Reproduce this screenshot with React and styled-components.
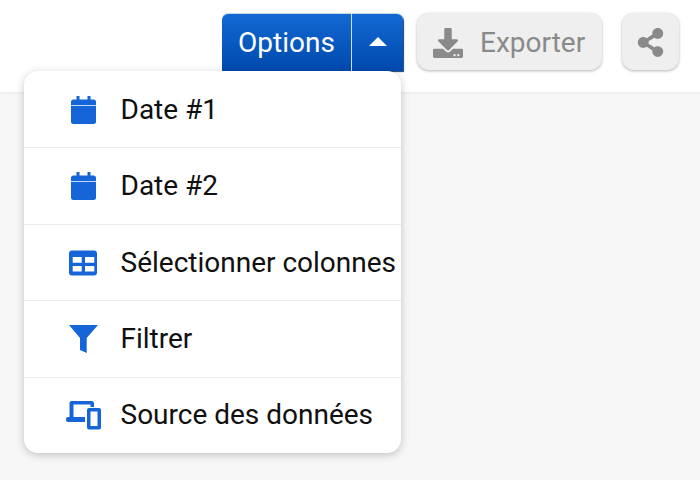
import React from "react"
import styled, { createGlobalStyle } from "styled-components"
import { FaDownload, FaShareAlt } from "react-icons/fa"

const GlobalStyle = createGlobalStyle`
  html, body {
    margin: 0;
    padding: 0;
    height: 100%;
    background: #f7f7f7;
    font-family: Roboto, "Liberation Sans", sans-serif;
    overflow: hidden;
  }
`

const Page = styled.div`
  position: relative;
  width: 700px;
  height: 480px;
  background: #f7f7f7;
`
const Header = styled.header`
  display: flex;
  justify-content: flex-end;
  align-items: flex-start;
  gap: 20px;
  height: 94px;
  box-sizing: border-box;
  padding: 14px 21px 0 0;
  background: #fff;
  border-bottom: 2px solid #efefef;
`
const SplitButton = styled.div`
  display: flex;
  width: 181px;
  height: 57px;
  border-radius: 6px 6px 0 0;
  color: #fff;
  background: linear-gradient(#1269d3, #0049ad);
  box-shadow: 1px 1px 1px #17407a, 0 -1px 1px #c5d3e6;
  margin-right: -6px;
`
const SplitLabel = styled.div`
  flex: 1;
  display: flex;
  align-items: center;
  justify-content: center;
  font-size: 28px;
  border-right: 1px solid #cfe0f5;
`
const SplitToggle = styled.div`
  width: 51px;
  display: flex;
  align-items: center;
  justify-content: center;
`
const Caret = styled.span`
  width: 0;
  height: 0;
  margin-top: -3px;
  border-left: 9px solid transparent;
  border-right: 9px solid transparent;
  border-bottom: 9px solid #fff;
`
const GreyButton = styled.div`
  display: flex;
  align-items: center;
  box-sizing: border-box;
  height: 57px;
  margin-top: -1px;
  padding-top: 2px;
  border-radius: 12px;
  color: #8a8a8a;
  background: #efefef;
  box-shadow: 0 1px 3px rgba(0, 0, 0, 0.3);
`
const ExportButton = styled(GreyButton)`
  width: 185px;
  padding-left: 16px;
  gap: 17px;
  font-size: 28px;
`
const ShareButton = styled(GreyButton)`
  width: 57px;
  justify-content: center;
`
const Menu = styled.ul`
  position: absolute;
  top: 71px;
  left: 24px;
  width: 377px;
  margin: 0;
  padding: 0;
  list-style: none;
  background: #fff;
  border-radius: 14px;
  box-shadow: 0 2px 8px rgba(0, 0, 0, 0.22);
`
const MenuItem = styled.li`
  display: flex;
  align-items: center;
  box-sizing: border-box;
  height: 76.4px;
  padding-left: 44px;
  gap: 21.5px;
  font-size: 28px;
  color: #101010;
  white-space: nowrap;
  & + & {
    padding-bottom: 0.8px;
    border-top: 1px solid #ececec;
  }
`
const IconBox = styled.svg`
  width: 31px;
  height: 31px;
  flex: none;
  fill: #1565d8;
`
const WideIconBox = styled(IconBox)`
  width: 36px;
  margin: 0 -3px 0 -2px;
`
const CalendarIcon = () => (
  <IconBox viewBox="0 0 31 31">
    <path d="M8.500 2h3v3.500h8V2h3v3.500h3A2.500 2.500 0 0 1 28 8v3H3V8a2.500 2.500 0 0 1 2.500-2.500h3zM3 11.800h25V27.500a2.500 2.500 0 0 1-2.500 2.500h-20A2.500 2.500 0 0 1 3 27.500z" />
  </IconBox>
)
const TableIcon = () => (
  <IconBox viewBox="0 0 31 31">
    <path fillRule="evenodd" d="M4 3.500h22a3 3 0 0 1 3 3v19a3 3 0 0 1-3 3H4a3 3 0 0 1-3-3v-19a3 3 0 0 1 3-3zM4.700 10v5.700h9V10zm12.300 0v5.700h9.300V10zM4.700 19v5.400h9V19zm12.300 0v5.400h9.300V19z" />
  </IconBox>
)
const FilterIcon = () => (
  <IconBox viewBox="0 0 31 31">
    <path d="M1 2h29L18.700 15v15L12 27V15z" />
  </IconBox>
)
const DevicesIcon = () => (
  <WideIconBox viewBox="0 0 36 31">
    <path fillRule="evenodd" d="M5.500 2h20A2.500 2.500 0 0 1 28 4.500V8h-3.500V5.500h-17V18H19v5H2a2 2 0 0 1-2-2v-1a2 2 0 0 1 2-2h1.500V4A2 2 0 0 1 5.500 2zM23 9h10a2 2 0 0 1 2 2v17.500a2 2 0 0 1-2 2H23a2 2 0 0 1-2-2V11a2 2 0 0 1 2-2zm1.500 3.500V27h7V12.500z" />
  </WideIconBox>
)

const items = [
  { label: "Date #1", Icon: CalendarIcon },
  { label: "Date #2", Icon: CalendarIcon },
  { label: "Sélectionner colonnes", Icon: TableIcon },
  { label: "Filtrer", Icon: FilterIcon },
  { label: "Source des données", Icon: DevicesIcon },
]

const App = () => {
  return (
    <Page>
      <GlobalStyle />
      <Header>
        <SplitButton>
          <SplitLabel>Options</SplitLabel>
          <SplitToggle>
            <Caret />
          </SplitToggle>
        </SplitButton>
        <ExportButton>
          <FaDownload size={30} />
          Exporter
        </ExportButton>
        <ShareButton>
          <FaShareAlt size={29} />
        </ShareButton>
      </Header>
      <Menu>
        {items.map(({ label, Icon }) => (
          <MenuItem key={label}>
            <Icon />
            {label}
          </MenuItem>
        ))}
      </Menu>
    </Page>
  )
}

export default App
